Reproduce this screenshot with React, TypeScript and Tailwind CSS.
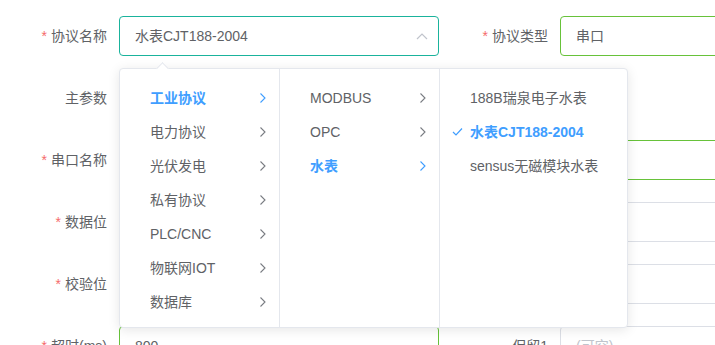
import React from "react";

const font = "font-['Liberation_Sans','Noto_Sans_CJK_SC',sans-serif]";

function Chevron({ active }: { active?: boolean }) {
  return (
    <svg width="7" height="11" viewBox="0 0 7 11" className="absolute right-[13px] top-1/2 -translate-y-1/2">
      <path d="M1.5 1l4.5 4.5L1.5 10" fill="none" stroke={active ? "#409eff" : "#7a7d83"} strokeWidth="1.1" />
    </svg>
  );
}

function Label({ text, required, width }: { text: string; required?: boolean; width: string }) {
  return (
    <div className={`${width} shrink-0 pr-3 h-10 flex items-center justify-end text-sm text-[#606266]`}>
      {required && <span className="text-[#f56c6c] mr-1">*</span>}
      {text}
    </div>
  );
}

function Input({ value, placeholder, border, width }: { value?: string; placeholder?: string; border: string; width: string }) {
  return (
    <div className={`${width} shrink-0 h-10 border ${border} rounded px-[15px] flex items-center text-sm bg-white`}>
      {value ? <span className="text-[#606266]">{value}</span> : <span className="text-[#c0c4cc]">{placeholder}</span>}
    </div>
  );
}

type Node = { label: string; active?: boolean; checked?: boolean; arrow?: boolean };

const col1: Node[] = [
  { label: "工业协议", active: true, arrow: true },
  { label: "电力协议", arrow: true },
  { label: "光伏发电", arrow: true },
  { label: "私有协议", arrow: true },
  { label: "PLC/CNC", arrow: true },
  { label: "物联网IOT", arrow: true },
  { label: "数据库", arrow: true },
];
const col2: Node[] = [
  { label: "MODBUS", arrow: true },
  { label: "OPC", arrow: true },
  { label: "水表", active: true, arrow: true },
];
const col3: Node[] = [
  { label: "188B瑞泉电子水表" },
  { label: "水表CJT188-2004", active: true, checked: true },
  { label: "sensus无磁模块水表" },
];

function Menu({ items, width, last }: { items: Node[]; width: string; last?: boolean }) {
  return (
    <div className={`${width} shrink-0 h-full pt-3 ${last ? "" : "border-r border-[#e4e7ed]"}`}>
      {items.map((n) => (
        <div
          key={n.label}
          className={`relative h-[34px] pl-[30px] flex items-center text-sm ${n.active ? "text-[#409eff] font-bold" : "text-[#606266]"}`}
        >
          {n.checked && (
            <svg width="11" height="9" viewBox="0 0 11 9" className="absolute left-[12px] top-1/2 -translate-y-1/2">
              <path d="M1 4.5l3 3L10 1" fill="none" stroke="#409eff" strokeWidth="1.2" />
            </svg>
          )}
          {n.label}
          {n.arrow && <Chevron active={n.active} />}
        </div>
      ))}
    </div>
  );
}

export default function App() {
  return (
    <div className={`relative w-[715px] h-[345px] overflow-hidden bg-white ${font}`}>
      <div className="flex flex-col gap-[22px] pt-4">
        <div className="flex">
          <Label text="协议名称" required width="w-[119px]" />
          <div className="relative">
            <Input value="水表CJT188-2004" border="border-[#1ab39c]" width="w-[320px]" />
            <svg width="12" height="7" viewBox="0 0 12 7" className="absolute right-[11px] top-[17px]">
              <path d="M1 6l5-5 5 5" fill="none" stroke="#c0c4cc" strokeWidth="1.2" />
            </svg>
          </div>
          <Label text="协议类型" required width="w-[121px]" />
          <Input value="串口" border="border-[#67c23a]" width="w-[300px]" />
        </div>
        <div className="flex">
          <Label text="主参数" width="w-[119px]" />
        </div>
        <div className="flex">
          <Label text="串口名称" required width="w-[119px]" />
          <Input border="border-[#67c23a]" width="w-[320px]" />
          <Label text="" width="w-[121px]" />
          <Input border="border-[#67c23a]" width="w-[300px]" />
        </div>
        <div className="flex">
          <Label text="数据位" required width="w-[119px]" />
          <Input border="border-[#dcdfe6]" width="w-[320px]" />
          <Label text="" width="w-[121px]" />
          <Input border="border-[#dcdfe6]" width="w-[300px]" />
        </div>
        <div className="flex">
          <Label text="校验位" required width="w-[119px]" />
          <Input border="border-[#dcdfe6]" width="w-[320px]" />
          <Label text="" width="w-[121px]" />
          <Input border="border-[#dcdfe6]" width="w-[300px]" />
        </div>
        <div className="flex">
          <Label text="超时(ms)" required width="w-[119px]" />
          <Input value="800" border="border-[#67c23a]" width="w-[320px]" />
          <Label text="保留1" width="w-[121px]" />
          <Input placeholder="(可空)" border="border-[#dcdfe6]" width="w-[300px]" />
        </div>
      </div>

      {/* cascader dropdown */}
      <div className="absolute left-[119px] top-[68px] w-[509px] h-[260px] bg-white border border-[#e4e7ed] rounded shadow-[0_2px_12px_0_rgba(0,0,0,0.1)]">
        <div className="absolute left-[38px] -top-[5px] w-[9px] h-[9px] rotate-45 bg-white border-l border-t border-[#e4e7ed]" />
        <div className="relative flex h-full">
          <Menu items={col1} width="w-[160px]" />
          <Menu items={col2} width="w-[160px]" />
          <Menu items={col3} width="flex-1" last />
        </div>
      </div>
    </div>
  );
}
